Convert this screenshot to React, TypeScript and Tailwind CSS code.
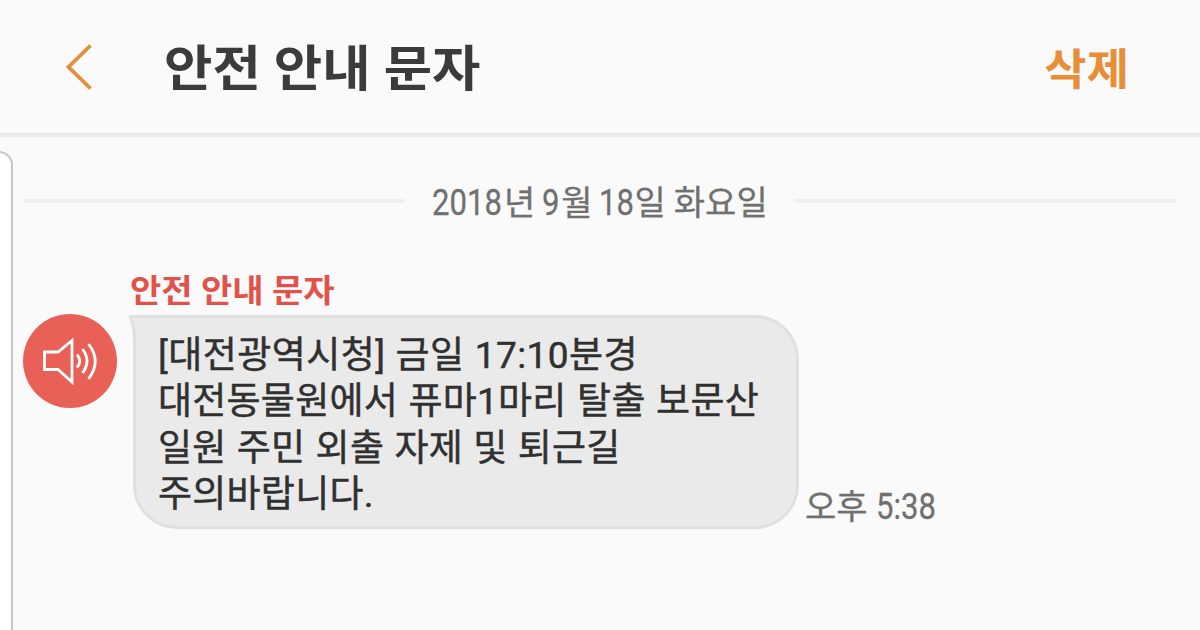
const messageLines = [
  { text: '[대전광역시청] 금일 17:10분경', spacing: 'tracking-[0.45px] [word-spacing:0.5px]' },
  { text: '대전동물원에서 퓨마1마리 탈출 보문산', spacing: 'tracking-[0.25px] [word-spacing:1px]' },
  { text: '일원 주민 외출 자제 및 퇴근길', spacing: 'tracking-[0.25px] [word-spacing:0.8px]' },
  { text: '주의바랍니다.', spacing: 'tracking-[0.25px]' },
]

function BackIcon() {
  return (
    <svg viewBox="0 0 28 48" className="h-12 w-7" fill="none" stroke="#e28f3d" strokeWidth="3.8">
      <path d="M25.5 2.5 L3.5 24 L25.5 45.5" />
    </svg>
  )
}

function SpeakerIcon() {
  return (
    <svg viewBox="0 0 94 94" className="h-[94px] w-[94px]" fill="none" stroke="#fff" strokeWidth="2.8">
      <path d="M21.5 38 H35 L49 26.5 V68 L35 55.5 H21.5 Z" />
      <path d="M54 40.5 Q59.5 47 54 53.5" />
      <path d="M59.5 35 Q68.5 47 59.5 59" />
      <path d="M65.5 30 Q79 47 65.5 65" />
    </svg>
  )
}

// narrow digits, as in the condensed face of the timestamps
function Digits({ children, className }: { children: string; className: string }) {
  return (
    <span className={`inline-block origin-left scale-x-[0.84] text-[37px] ${className}`}>{children}</span>
  )
}

function Header() {
  return (
    <header className="flex h-[137px] items-center border-b-4 border-[#e9e9e9] pt-px pr-[71px] pl-[65px]">
      <button type="button" aria-label="뒤로">
        <BackIcon />
      </button>
      <h1 className="mt-[5px] ml-[71px] scale-y-[0.93] text-[52.6px] leading-none font-bold text-[#3b3b3b]">
        안전 안내 문자
      </h1>
      <button
        type="button"
        className="mt-[5px] ml-auto scale-y-[0.94] text-[46px] leading-none font-bold text-[#e98d38]"
      >
        삭제
      </button>
    </header>
  )
}

function DateDivider() {
  return (
    <div className="mt-10 flex h-12 items-center pr-6 pl-6">
      <div className="h-1 w-[380px] bg-[#eeeeee]" />
      <div className="mt-[2px] ml-7 flex w-[336px] items-baseline text-[34px] leading-none whitespace-nowrap text-[#707070] [-webkit-text-stroke:0.3px_#707070]">
        <Digits className="w-[72px]">2018</Digits>년
        <Digits className="ml-[7px] w-[19px]">9</Digits>월
        <Digits className="ml-[6px] w-[36px]">18</Digits>일
        <span className="ml-[8px]">화요일</span>
      </div>
      <div className="ml-auto h-1 w-[381px] bg-[#eeeeee]" />
    </div>
  )
}

function Message() {
  return (
    <div className="mt-[46px] flex pl-[23px]">
      <div className="mt-[43px] h-[94px] w-[94px] shrink-0 rounded-full bg-[#e96056]">
        <SpeakerIcon />
      </div>
      <div className="ml-[11px]">
        <div className="ml-[2px] h-[44px]">
          <p className="scale-y-[0.93] text-[34px] leading-[41px] font-bold text-[#e3524a]">안전 안내 문자</p>
        </div>
        <div className="relative ml-[5px] h-[214px] w-[666px] rounded-[44px] rounded-tl-none border-[3px] border-[#e0e0e0] bg-[#eaeaea] pt-[14.5px] pl-[22px]">
          <svg viewBox="0 0 12 26" className="absolute -top-[3px] -left-[7px] h-[26px] w-3">
            <path d="M0 0 H12 V26 H7 Q6 8 0 0Z" fill="#eaeaea" />
            <path d="M12 1.5 H1 Q5 8 5.5 26" fill="none" stroke="#e0e0e0" strokeWidth="3" />
          </svg>
          {messageLines.map((line) => (
            <p
              key={line.text}
              className={`h-[46.5px] text-[37px] leading-[46.5px] whitespace-nowrap text-[#303030] [-webkit-text-stroke:0.45px_#303030] ${line.spacing}`}
            >
              {line.text}
            </p>
          ))}
        </div>
      </div>
      <div className="mb-[4px] ml-[6px] flex items-baseline self-end text-[34px] leading-none whitespace-nowrap text-[#707070] [-webkit-text-stroke:0.3px_#707070]">
        오후
        <Digits className="ml-[8px]">5:38</Digits>
      </div>
    </div>
  )
}

export default function App() {
  return (
    <div className="h-[630px] w-[1200px] overflow-hidden bg-[#fafafa] font-[Roboto,'Noto_Sans_CJK_KR',sans-serif]">
      <Header />
      <main className="relative h-[493px]">
        <div className="absolute top-[14px] -left-5 h-[520px] w-[33px] rounded-tr-[14px] border-[2.5px] border-[#c6c6c6] bg-white" />
        <div className="flow-root">
          <DateDivider />
          <Message />
        </div>
      </main>
    </div>
  )
}
